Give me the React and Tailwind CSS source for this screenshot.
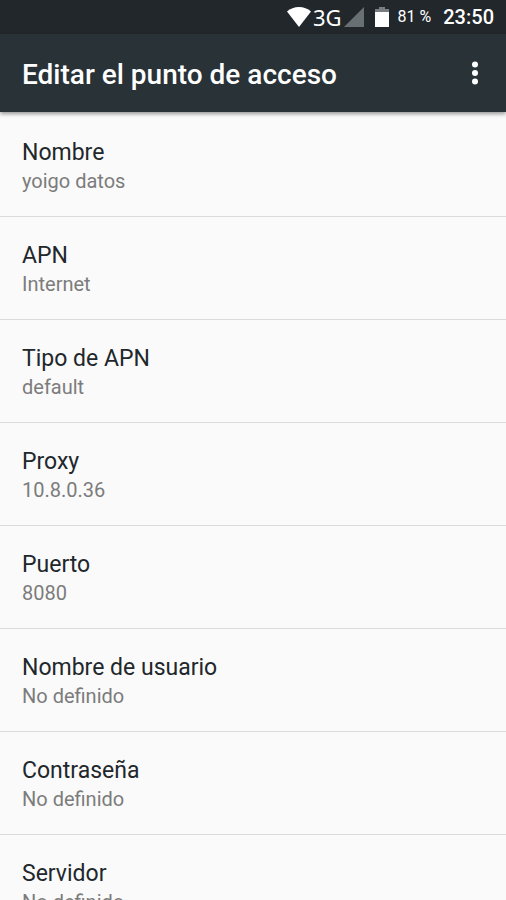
const settings = [
  { title: 'Nombre', value: 'yoigo datos' },
  { title: 'APN', value: 'Internet' },
  { title: 'Tipo de APN', value: 'default' },
  { title: 'Proxy', value: '10.8.0.36' },
  { title: 'Puerto', value: '8080' },
  { title: 'Nombre de usuario', value: 'No definido' },
  { title: 'Contraseña', value: 'No definido' },
  { title: 'Servidor', value: 'No definido' },
];

function StatusBar() {
  return (
    <div className="flex h-[34px] shrink-0 items-center justify-end bg-[#21272b] pr-3 text-white">
      <svg className="h-5 w-6" viewBox="0 0 24 20" fill="currentColor" aria-label="Wi-Fi">
        <path d="M0 4.500C3.300 1.500 7.400 0 12 0S20.700 1.500 24 4.500L12 20Z" />
      </svg>
      <span className="ml-0.5 font-['Noto_Sans',sans-serif] text-[22px] leading-8">3G</span>
      <svg className="ml-0.5 h-5 w-5" viewBox="0 0 20 20" fill="#697074" aria-label="Señal">
        <path d="M20 0V20H0Z" />
      </svg>
      <svg className="ml-2.5 h-5 w-4" viewBox="0 0 16 20" aria-label="Batería">
        <path d="M5 0H11V2H15V5H1V2H5Z" fill="#777d80" />
        <path d="M1 5H15V20H1Z" fill="#fff" />
      </svg>
      <span className="ml-2 text-base">81 %</span>
      <span className="ml-3 text-xl font-medium">23:50</span>
    </div>
  );
}

function Setting({ title, value }) {
  return (
    <li className="border-b border-[#dadada]">
      <button type="button" className="block w-full px-[22px] pt-[25px] pb-[21px] text-left">
        <span className="block text-[23px] leading-7 text-[#21272b]">{title}</span>
        <span className="block text-xl leading-7 text-[#7c7c7c]">{value}</span>
      </button>
    </li>
  );
}

export default function App() {
  return (
    <div className="flex h-screen flex-col overflow-hidden bg-[#fafafa] font-[Roboto,sans-serif]">
      <StatusBar />
      <header className="relative flex h-[78px] shrink-0 items-center justify-between bg-[#283237] pr-4 pl-[22px] text-white shadow-[0_2px_4px_rgba(0,0,0,0.4)]">
        <h1 className="pt-1 text-[28px] leading-8 font-medium">Editar el punto de acceso</h1>
        <button type="button" aria-label="Más opciones" className="flex h-10 w-[30px] items-center justify-center">
          <svg className="h-6 w-1.5" viewBox="0 0 6 24" fill="currentColor">
            <circle cx="3" cy="3.500" r="3" />
            <circle cx="3" cy="12" r="3" />
            <circle cx="3" cy="20.500" r="3" />
          </svg>
        </button>
      </header>
      <ul className="min-h-0 flex-1 overflow-hidden pt-0.5">
        {settings.map((item) => (
          <Setting key={item.title} title={item.title} value={item.value} />
        ))}
      </ul>
    </div>
  );
}
